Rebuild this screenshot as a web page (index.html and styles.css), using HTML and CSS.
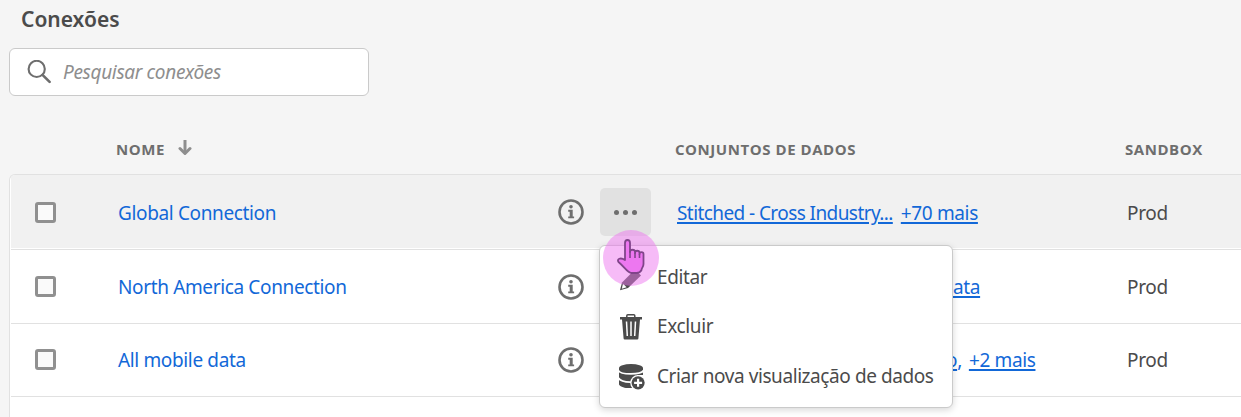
FILE: index.html
```
<!DOCTYPE html>
<html lang="pt-BR">
<head>
<meta charset="utf-8">
<title>Conexões</title>
<link rel="stylesheet" href="styles.css">
</head>
<body>
<svg class="defs" width="0" height="0">
  <symbol id="info" viewBox="0 0 26 26">
    <circle cx="13" cy="13" r="11.5" fill="none" stroke="#6e6e6e" stroke-width="2.6"/>
    <circle cx="13" cy="7.7" r="1.8" fill="#6e6e6e"/>
    <path d="M10.2 10.8h4.500v6.600h1.400v1.900h-5.900v-1.900h1.500v-4.700h-1.5z" fill="#6e6e6e"/>
  </symbol>
</svg>
<main class="page">
  <h1 class="title">Conexões</h1>
  <div class="search">
    <svg width="24" height="24" viewBox="0 0 24 24" fill="none" stroke="#6e6e6e" stroke-width="2.1"><circle cx="9.7" cy="8.9" r="8.1"/><path d="M15.500 14.800l7.100 7.100" stroke-width="2.6" stroke-linecap="round"/></svg>
    <span class="placeholder">Pesquisar conexões</span>
  </div>
  <div class="grid head">
    <span></span>
    <span class="sort"><span class="h-name">NOME</span><svg width="14" height="16" viewBox="0 0 14 16" fill="none" stroke="#8e8e8e"><path d="M7 0v12" stroke-width="3"/><path d="M2 8.5l5 5 5-5" stroke-width="3" stroke-linecap="round" stroke-linejoin="round"/></svg></span>
    <span></span><span></span>
    <span class="h-data">CONJUNTOS DE DADOS</span>
    <span class="h-sand">SANDBOX</span>
  </div>
  <div class="table">
    <div class="grid row hovered">
      <span class="check"></span>
      <a class="name n1">Global Connection</a>
      <svg class="info" width="26" height="26"><use href="#info"/></svg>
      <span class="more"><i></i><i></i><i></i></span>
      <span class="sets"><a class="d1">Stitched - Cross Industry...</a><a class="d2">+70 mais</a></span>
      <span class="sandbox">Prod</span>
    </div>
    <div class="grid row second">
      <span class="check"></span>
      <a class="name n2">North America Connection</a>
      <svg class="info" width="26" height="26"><use href="#info"/></svg>
      <span></span>
      <span class="sets s2"><a class="d3">ata</a></span>
      <span class="sandbox">Prod</span>
    </div>
    <div class="grid row third">
      <span class="check"></span>
      <a class="name n3">All mobile data</a>
      <svg class="info" width="26" height="26"><use href="#info"/></svg>
      <span></span>
      <span class="sets s3"><span class="comma"><a>o</a>,</span><a class="d4">+2 mais</a></span>
      <span class="sandbox">Prod</span>
    </div>
    <div class="row last"></div>
  </div>
  <div class="menu">
    <div class="item">
      <svg width="28" height="28" viewBox="0 0 28 28"><path d="M5 19.500L18 6.500l6 6L11 25l-8 2.300z" fill="#4b4b4b"/><path d="M6 20.800l3.600 3.500-4.800 1.500z" fill="#fff"/></svg>
      <span class="m1">Editar</span>
    </div>
    <div class="item">
      <svg width="28" height="28" viewBox="0 0 28 28"><path d="M9.8 5.500V3.700q0-1 1-1h6q1 0 1 1v1.800" fill="none" stroke="#4b4b4b" stroke-width="1.5"/><path d="M3 5h22v2.500H23L21.400 26.500q-.1 1-1.1 1H7.700q-1 0-1.1-1L5 7.500H3z" fill="#4b4b4b"/><path d="M9.500 9.500l.8 14.500M14 9.500v14.500M18.500 9.500l-.8 14.500" stroke="#fff" stroke-width="1.5"/></svg>
      <span class="m2">Excluir</span>
    </div>
    <div class="item">
      <svg width="28" height="28" viewBox="0 0 28 28"><path d="M2 6v16.500c2 3 8 4 12 3.500h6V13h6V6z" fill="#4b4b4b"/><path d="M1.5 8.500c2 4.500 22.500 4.500 25 0M1.5 16c2 3.500 9 4.500 17 3.800" fill="none" stroke="#fff" stroke-width="1.7"/><ellipse cx="14" cy="6" rx="12" ry="4" fill="#4b4b4b"/><circle cx="21.100" cy="20.8" r="7.900" fill="#fff"/><circle cx="21.100" cy="20.8" r="6.600" fill="#4b4b4b"/><path d="M21.100 16.800v8M17.100 20.8h8" stroke="#fff" stroke-width="2.200"/></svg>
      <span class="m3">Criar nova visualização de dados</span>
    </div>
  </div>
  <svg class="pointer" width="56" height="56" viewBox="0 0 56 56"><circle cx="28" cy="28" r="28" fill="#ed77f0" fill-opacity=".5"/><path d="M22 29V13c0-4 5-4 5 0v9c0-3 5-3 5 0v1c0-3 4.500-3 4.500 0v1c0-2.500 4-2.500 4 0v10c0 3-2 4-2 6-1 2-2.500 3-5 3h-5c-4 0-7-6-13-11-2-3 2-5 6.500-2z" fill="#ed77f0" stroke="#80448a" stroke-width="1.8" stroke-linejoin="round"/><path d="M27 21v7M32 23v5M36.500 24v4" stroke="#80448a" stroke-width="1.600"/></svg>
</main>
</body>
</html>
```
FILE: styles.css
```
* { box-sizing: border-box; }
body { margin: 0; background: #f5f5f5; color: #4b4b4b; font: 19px/24px "Noto Sans", "Open Sans", sans-serif; letter-spacing: -.36px; }
.defs { display: block; position: absolute; }
.page { position: relative; width: 1241px; height: 417px; overflow: hidden; white-space: nowrap; }
.title { margin: 0; height: 48px; padding: 7px 0 0 21px; font-size: 21px; line-height: 24px; font-weight: 600; letter-spacing: 0; }
.search { width: 360px; height: 48px; margin-left: 9px; padding: 0 0 0 17px; display: flex; align-items: center; gap: 12px; background: #fff; border: 1px solid #cacaca; border-radius: 6px; }
.placeholder { color: #8e8e8e; font-style: italic; letter-spacing: -.33px; }
.grid { display: grid; grid-template-columns: 108px 440px 42px 77px 450px 1fr; align-items: center; }
.head { height: 78px; padding: 28px 0 0 8px; font-family: "Open Sans", "Noto Sans", sans-serif; font-size: 15px; font-weight: 700; color: #6e6e6e; letter-spacing: .55px; }
.sort { display: flex; gap: 13px; align-items: center; }
.sort svg { margin-top: -2px; }
.table { height: 243px; margin-left: 9px; border: 1px solid #e1e1e1; border-right: 0; border-bottom: 0; border-radius: 6px 0 0 0; background: #fff; overflow: hidden; }
.row { height: 73px; margin-left: 1px; border-bottom: 1px solid #e1e1e1; grid-template-columns: 107px 440px 42px 77px 450px 1fr; }
.hovered { height: 75px; background: #f1f1f1; box-shadow: inset 0 -1px #fff; }
.hovered .name, .hovered .sets, .hovered .sandbox { padding-top: 2px; }
.second { height: 74px; }
.third { padding-bottom: 1px; }
.last { border: 0; }
.check { width: 21px; height: 21px; margin-left: 24px; border: 3px solid #909090; border-radius: 3px; background: #fafafa; }
a, .comma { color: #1268d8; }
.sets a { text-decoration: underline; text-decoration-thickness: 2px; text-underline-offset: 2px; text-decoration-skip-ink: auto; }
.sets { display: flex; gap: 8px; }
.sets .d1 { letter-spacing: -.58px; }
.more { width: 51px; height: 48px; background: #e1e1e1; border-radius: 5px; display: flex; align-items: center; justify-content: center; gap: 4px; }
.more i { width: 5px; height: 5px; border-radius: 50%; background: #6e6e6e; }
.s2 { padding-left: 276px; }
.s3 { padding-left: 269px; gap: 7px; }
.menu { position: absolute; left: 599px; top: 245px; width: 354px; height: 163px; padding: 6px 0 0 17px; background: #fff; border: 1px solid #cacaca; border-radius: 6px; box-shadow: 0 2px 7px rgba(0,0,0,.16); }
.item { display: flex; align-items: center; gap: 12px; height: 49.500px; }
.m3 { letter-spacing: -.42px; }
.pointer { position: absolute; left: 603px; top: 230px; }
```
